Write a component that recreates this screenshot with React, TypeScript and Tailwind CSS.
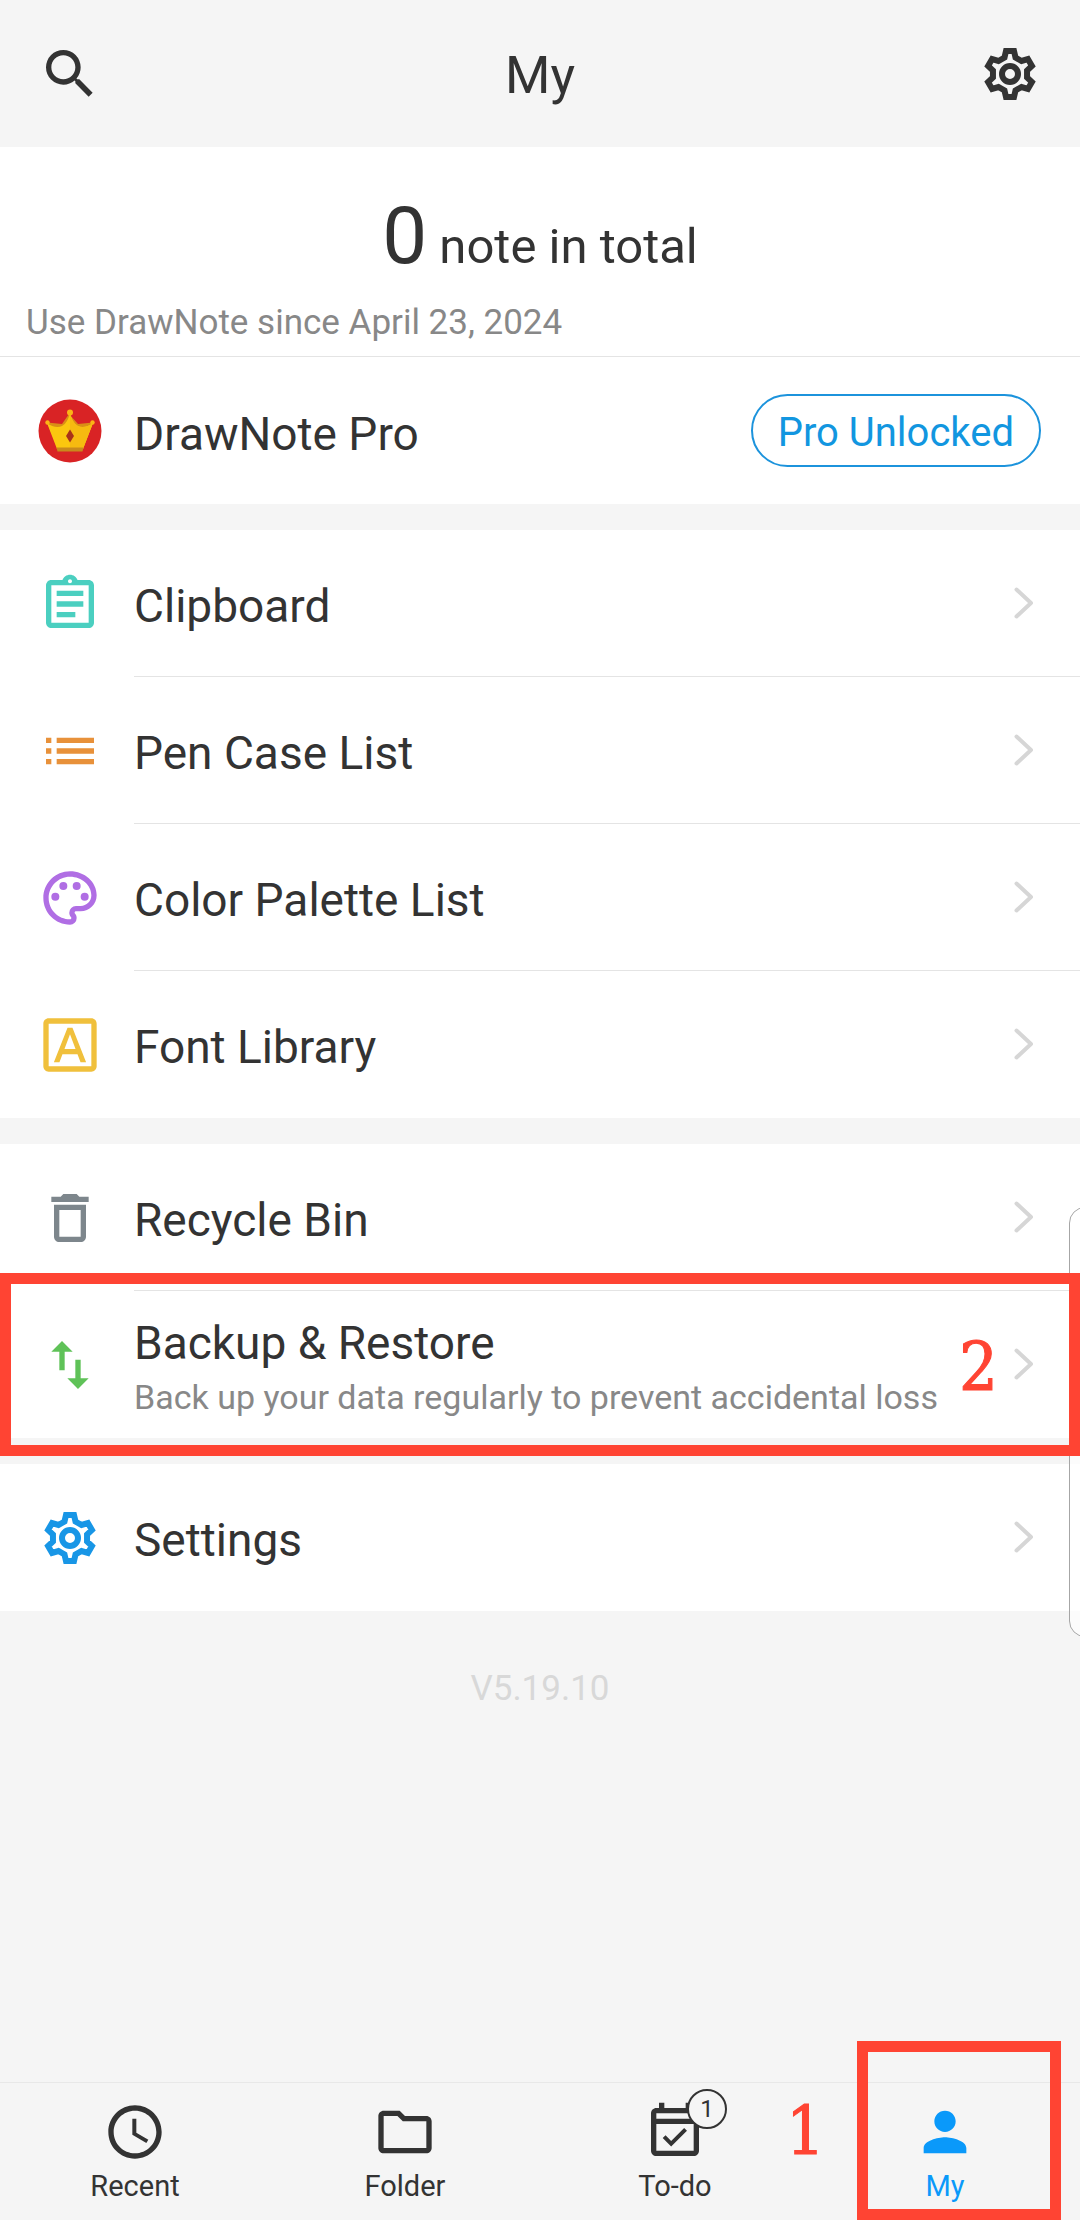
import type { ComponentType, ReactNode } from "react";
import {
  MdDeleteOutline,
  MdList,
  MdOutlineAccessTime,
  MdOutlineAssignment,
  MdOutlineEventAvailable,
  MdOutlineFolder,
  MdOutlineFontDownload,
  MdOutlinePalette,
  MdPerson,
  MdSearch,
  MdSwapVert,
} from "react-icons/md";

type Icon = ComponentType<{ className?: string }>;

// One tooth of the gear, centred on the origin and pointing up.
const TOOTH: [number, number][] = [
  [-5.5, -16.5],
  [-4, -23],
  [4, -23],
  [5.5, -16.5],
];

const GEAR_POINTS = [0, 60, 120, 180, 240, 300]
  .flatMap((deg) => {
    const a = (deg * Math.PI) / 180;
    return TOOTH.map(([x, y]) => [
      32 + x * Math.cos(a) - y * Math.sin(a),
      32 + x * Math.sin(a) + y * Math.cos(a),
    ]);
  })
  .map(([x, y]) => `${x.toFixed(2)},${y.toFixed(2)}`)
  .join(" ");

function Gear({ className }: { className?: string }) {
  return (
    <svg viewBox="0 0 64 64" className={className} fill="none" stroke="currentColor" strokeWidth="6" aria-hidden="true">
      <polygon points={GEAR_POINTS} strokeLinejoin="miter" />
      <circle cx="32" cy="32" r="8" />
    </svg>
  );
}

function Crown() {
  return (
    <svg viewBox="0 0 64 64" className="size-16 shrink-0" aria-hidden="true">
      <circle cx="32" cy="32" r="31.500" fill="#d92325" />
      <path d="M9 23.500 L24 25 L31 15 L40 25 L55 23.500 L44 50 H20 Z" fill="#d98f16" />
      <path d="M9 24 C14 28 20 29 24 27 C28 25 30.500 20 32 14 C33.500 20 36 25 40 27 C44 29 50 28 55 24 L45 50 H19 Z" fill="#fbc70f" />
      <path d="M32 14 C33.500 20 36 25 40 27 C44 29 50 28 55 24 L45 50 H32 Z" fill="#f6ba10" />
      <path d="M18.500 48.500 H45.500 L44.500 52.500 H19.500 Z" fill="#c98a1c" />
      <circle cx="32" cy="13.500" r="3" fill="#fbb416" />
      <circle cx="9.500" cy="23.500" r="2.200" fill="#fbb416" />
      <circle cx="54.500" cy="23.500" r="2.200" fill="#fbb416" />
      <path d="M32 30.500 L36 37 L32 43.500 L28 37 Z" fill="#a8321a" />
    </svg>
  );
}

function Chevron() {
  return (
    <svg viewBox="0 0 20 36" className="h-9 w-5 shrink-0" aria-hidden="true">
      <path
        d="M2.500 4.500 L17 18 L2.500 31.500"
        fill="none"
        stroke="#d6d6d6"
        strokeWidth="4"
        strokeLinecap="round"
        strokeLinejoin="round"
      />
    </svg>
  );
}

type RowProps = {
  icon: Icon;
  color: string;
  title: string;
  subtitle?: string;
  divider?: boolean;
  step?: string;
};

function Row({ icon: Icon, color, title, subtitle, divider, step }: RowProps) {
  return (
    <button type="button" className="relative flex min-h-[147px] w-full items-stretch pl-[38px] text-left">
      <Icon className={`size-16 shrink-0 self-center ${color}`} />
      <span
        className={`ml-8 flex flex-1 items-center gap-4 border-b pr-[46px] ${
          divider ? "border-[#e4e4e4]" : "border-transparent"
        }`}
      >
        <span className="flex flex-1 flex-col pt-1.5">
          <span className="text-[46px] leading-[56px]">{title}</span>
          {subtitle && (
            <span className="mt-1 whitespace-nowrap text-[34px] leading-[44px] text-[#888888]">{subtitle}</span>
          )}
        </span>
        {step && <StepNumber>{step}</StepNumber>}
        <Chevron />
      </span>
      {step && <span className="absolute inset-x-0 -inset-y-[18px] z-20 border-[11px] border-[#ff4433]" />}
    </button>
  );
}

function StepNumber({ children }: { children: ReactNode }) {
  return (
    <span className="pt-1.5 font-['DejaVu_Serif_Condensed','DejaVu_Serif',serif] text-[68px] leading-none text-[#ff4433] [-webkit-text-stroke:1px_#ff4433]">
      {children}
    </span>
  );
}

type TabProps = {
  icon: Icon;
  label: string;
  active?: boolean;
  badge?: string;
  children?: ReactNode;
};

function Tab({ icon: Icon, label, active, badge, children }: TabProps) {
  return (
    <button
      type="button"
      aria-current={active ? "page" : undefined}
      className={`relative flex flex-col items-center pt-[17px] pb-3.5 ${active ? "text-[#0a99fa]" : ""}`}
    >
      <span className="relative">
        <Icon className="size-16" />
        {badge && (
          <span className="absolute -top-[11px] -right-5 flex size-10 items-center justify-center rounded-full border-2 border-[#333333] bg-[#f5f5f5] text-[24px] leading-none">
            {badge}
          </span>
        )}
      </span>
      <span className="mt-0.5 text-[29px] leading-10">{label}</span>
      {children}
    </button>
  );
}

export default function App() {
  return (
    <div className="relative flex min-h-screen flex-col overflow-hidden bg-[#f5f5f5] font-[Roboto,sans-serif] text-[#333333]">
      <header className="flex min-h-[147px] items-center justify-between px-[38px]">
        <button type="button" aria-label="Search">
          <MdSearch className="size-16" />
        </button>
        <h1 className="pt-1 text-[52px] leading-[60px]">My</h1>
        <button type="button" aria-label="Settings">
          <Gear className="size-16" />
        </button>
      </header>

      <main className="flex flex-1 flex-col">
        <section className="border-b border-[#e4e4e4] bg-white px-[26px] pt-12 pb-[9px]">
          <p className="text-center text-[49px] leading-[104px]">
            <span className="text-[80px] leading-none">0</span> note in total
          </p>
          <p className="text-[35px] leading-[48px] text-[#888888]">Use DrawNote since April 23, 2024</p>
        </section>

        <section className="flex min-h-[147px] items-center bg-white pr-[39px] pl-[38px]">
          <Crown />
          <h2 className="ml-8 flex-1 pt-1.5 text-[46px] leading-[56px]">DrawNote Pro</h2>
          <button
            type="button"
            className="rounded-full border-2 border-[#1c93dc] px-[25px] pt-[11px] pb-1.5 text-[40px] leading-[52px] text-[#1296e0]"
          >
            Pro Unlocked
          </button>
        </section>

        <section className="mt-[26px] bg-white">
          <Row icon={MdOutlineAssignment} color="text-[#4bcfc0]" title="Clipboard" divider />
          <Row icon={MdList} color="text-[#e8913a]" title="Pen Case List" divider />
          <Row icon={MdOutlinePalette} color="text-[#b06ee4]" title="Color Palette List" divider />
          <Row icon={MdOutlineFontDownload} color="text-[#f0c03c]" title="Font Library" />
        </section>

        <section className="mt-[26px] bg-white">
          <Row icon={MdDeleteOutline} color="text-[#7d868c]" title="Recycle Bin" divider />
          <Row
            icon={MdSwapVert}
            color="text-[#5fc258]"
            title="Backup & Restore"
            subtitle="Back up your data regularly to prevent accidental loss"
            step="2"
          />
        </section>

        <section className="mt-[26px] bg-white">
          <Row icon={Gear} color="text-[#1896e6]" title="Settings" />
        </section>

        <p className="pt-[54px] text-center text-[35px] leading-[48px] text-[#d8d8d8]">V5.19.10</p>
      </main>

      <nav className="grid grid-cols-4 border-t border-[#e8e8e8]">
        <Tab icon={MdOutlineAccessTime} label="Recent" />
        <Tab icon={MdOutlineFolder} label="Folder" />
        <Tab icon={MdOutlineEventAvailable} label="To-do" badge="1" />
        <Tab icon={MdPerson} label="My" active>
          <span className="absolute -top-[42px] right-[19px] bottom-0 left-[47px] border-[11px] border-[#ff4433]" />
          <span className="absolute top-2 -left-6 flex">
            <StepNumber>1</StepNumber>
          </span>
        </Tab>
      </nav>

      {/* Edge panel handle, partly off the right side of the screen */}
      <div className="absolute top-[1207px] -right-[21px] z-10 h-[430px] w-8 rounded-[20px] border border-[#a6a6a6] bg-white/70" />
    </div>
  );
}
